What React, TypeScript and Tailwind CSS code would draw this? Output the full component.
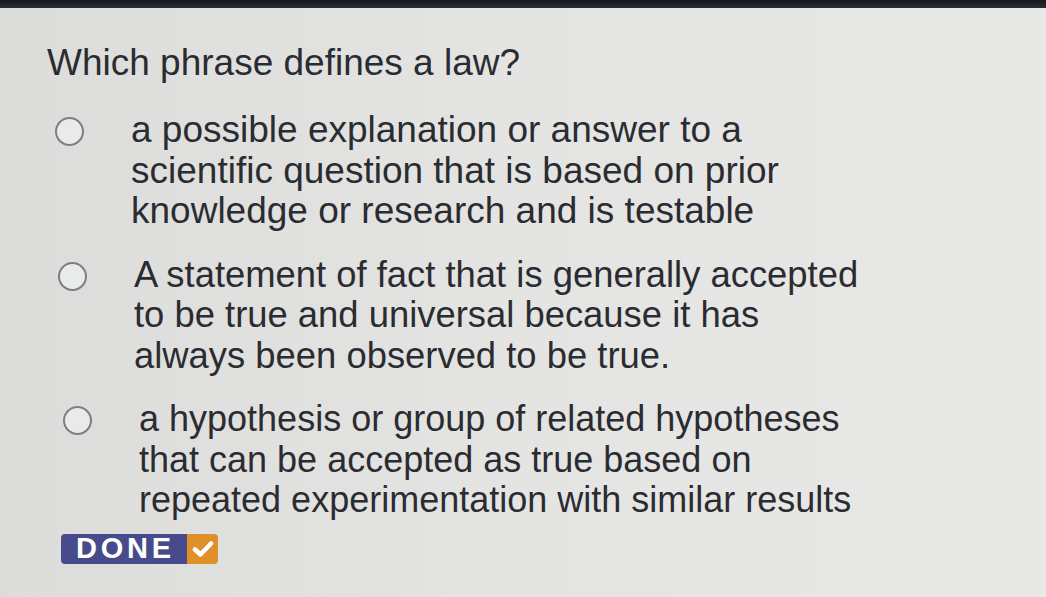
import React from "react";

const options = [
  {
    lines: [
      "a possible explanation or answer to a",
      "scientific question that is based on prior",
      "knowledge or research and is testable",
    ],
    shift: "ml-0 text-[37px]",
  },
  {
    lines: [
      "A statement of fact that is generally accepted",
      "to be true and universal because it has",
      "always been observed to be true.",
    ],
    shift: "ml-[3px] text-[36.4px]",
  },
  {
    lines: [
      "a hypothesis or group of related hypotheses",
      "that can be accepted as true based on",
      "repeated experimentation with similar results",
    ],
    shift: "ml-[8px] text-[36px]",
  },
];

const Radio = () => (
  <span className="mt-[7px] h-[29px] w-[29px] shrink-0 rounded-full border-[2.5px] border-[#7c7e84] bg-[#e9eaea]" />
);

const DoneButton = () => (
  <div className="ml-[14px] flex h-[30px] w-[157px] overflow-hidden rounded-[4px]">
    <div className="flex w-[126px] items-center justify-center bg-[#474b8c] pl-[3px]">
      <span className="font-['Liberation_Sans',sans-serif] text-[29px] font-bold leading-none tracking-[0.13em] text-white">
        DONE
      </span>
    </div>
    <div className="flex flex-1 items-center justify-center bg-[#df9029]">
      <svg width="22" height="18" viewBox="0 0 22 18">
        <path d="M3 9.5 L8.5 14.5 L19 3.5" fill="none" stroke="#ffffff" strokeWidth="4.5" strokeLinecap="round" strokeLinejoin="round" />
      </svg>
    </div>
  </div>
);

export default function App() {
  return (
    <div className="flex h-[597px] w-[1046px] flex-col overflow-hidden bg-gradient-to-r from-[#dcdddb] via-[#e4e5e3] to-[#e8e9e7] font-['Liberation_Sans',Arial,sans-serif] text-[#2b2c31]">
      <div className="h-[8px] w-full shrink-0 bg-gradient-to-b from-[#15171f] to-[#2a2d36]" />
      <main className="flex flex-col pl-[47px] pt-[33px]">
        <h1 className="whitespace-nowrap text-[37px] font-normal leading-[44px]">
          Which phrase defines a law?
        </h1>

        <div className="mt-[25px] flex flex-col gap-[23px]">
          {options.map((opt, i) => (
            <label key={i} className={`flex items-start gap-[47px] pl-[8px] ${opt.shift}`}>
              <Radio />
              <span className="flex flex-col whitespace-nowrap leading-[40.5px]">
                {opt.lines.map((line) => (
                  <span key={line}>{line}</span>
                ))}
              </span>
            </label>
          ))}
        </div>

        <div className="mt-[13px]">
          <DoneButton />
        </div>
      </main>
    </div>
  );
}
